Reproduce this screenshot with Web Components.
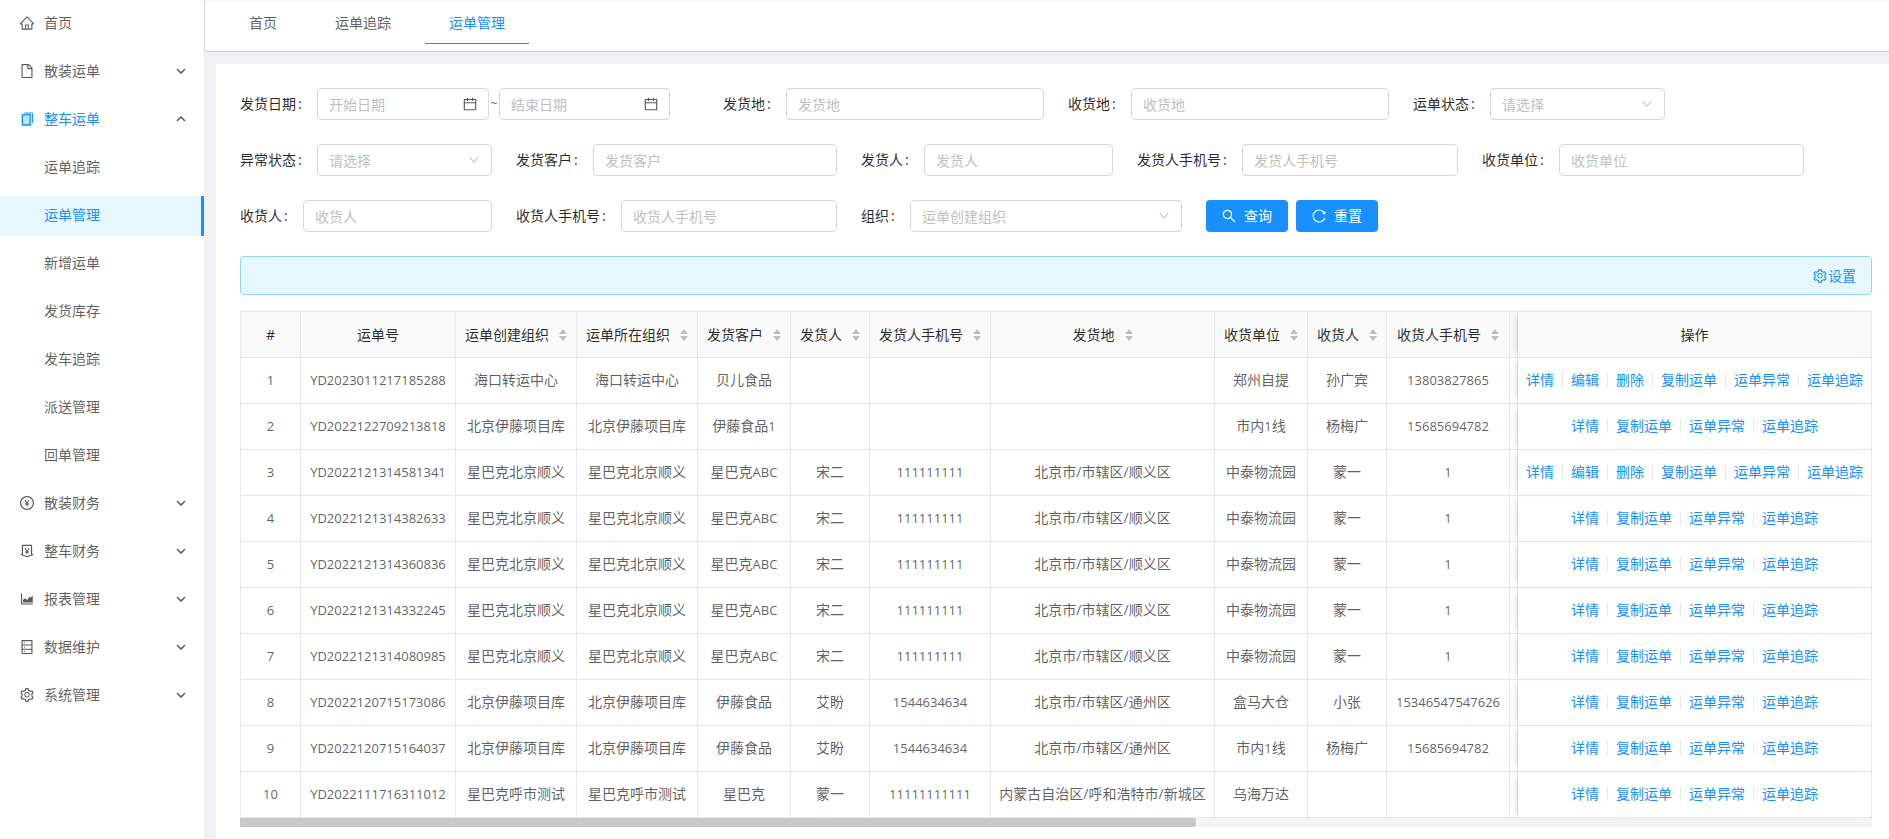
<!DOCTYPE html>
<html lang="zh">
<head>
<meta charset="utf-8">
<title>运单管理</title>
<style>
html, body { margin: 0; height: 100%; }
body {
    font: 14px/22px "Open Sans", "Noto Sans CJK SC", sans-serif;
    color: rgba(0, 0, 0, 0.65);
    background: #f0f2f5;
    overflow: hidden;
}
#app { display: flex; height: 839px; }
#main { flex: 1; min-width: 0; display: flex; flex-direction: column; }
</style>
</head>
<body>
<div id="app">
    <side-menu>
        <menu-item icon="home">首页</menu-item>
        <menu-item icon="file" arrow="down">散装运单</menu-item>
        <menu-item icon="copy" arrow="up" open>整车运单</menu-item>
        <menu-item sub>运单追踪</menu-item>
        <menu-item sub selected>运单管理</menu-item>
        <menu-item sub>新增运单</menu-item>
        <menu-item sub>发货库存</menu-item>
        <menu-item sub>发车追踪</menu-item>
        <menu-item sub>派送管理</menu-item>
        <menu-item sub>回单管理</menu-item>
        <menu-item icon="pay" arrow="down">散装财务</menu-item>
        <menu-item icon="money" arrow="down">整车财务</menu-item>
        <menu-item icon="area" arrow="down">报表管理</menu-item>
        <menu-item icon="database" arrow="down">数据维护</menu-item>
        <menu-item icon="setting" arrow="down">系统管理</menu-item>
    </side-menu>
    <div id="main">
        <tab-bar>
            <tab-item>首页</tab-item>
            <tab-item>运单追踪</tab-item>
            <tab-item active>运单管理</tab-item>
        </tab-bar>
        <page-card>
            <form-row>
                <form-field label="发货日期" width="430"><date-range></date-range></form-field>
                <form-field label="发货地" width="350" label-width="92"><text-box>发货地</text-box></form-field>
                <form-field label="收货地" width="321"><text-box>收货地</text-box></form-field>
                <form-field label="运单状态" width="252"><text-box select>请选择</text-box></form-field>
            </form-row>
            <form-row>
                <form-field label="异常状态" width="252"><text-box select>请选择</text-box></form-field>
                <form-field label="发货客户" width="321"><text-box>发货客户</text-box></form-field>
                <form-field label="发货人" width="252"><text-box>发货人</text-box></form-field>
                <form-field label="发货人手机号" width="321"><text-box>发货人手机号</text-box></form-field>
                <form-field label="收货单位" width="322"><text-box>收货单位</text-box></form-field>
            </form-row>
            <form-row>
                <form-field label="收货人" width="252"><text-box>收货人</text-box></form-field>
                <form-field label="收货人手机号" width="321"><text-box>收货人手机号</text-box></form-field>
                <form-field label="组织" width="321"><text-box select>运单创建组织</text-box></form-field>
                <blue-button icon="search">查询</blue-button>
                <blue-button icon="reload">重置</blue-button>
            </form-row>
            <alert-bar>设置</alert-bar>
            <waybill-table></waybill-table>
        </page-card>
    </div>
</div>

<script>
// antd outlined icons, 1024 box
const YEN = 'M660.6 312h-54.5c-3 0-5.8 1.7-7.1 4.4l-84.7 168.8H511l-84.7-168.8a8 8 0 0 0-7.1-4.4h-55.7c-1.3 0-2.6.3-3.8 1-3.9 2.1-5.3 7-3.2 10.8l103.9 191.6h-57c-4.4 0-8 3.6-8 8v27.1c0 4.4 3.6 8 8 8h76v39h-76c-4.4 0-8 3.6-8 8v27.1c0 4.4 3.6 8 8 8h76V704c0 4.4 3.6 8 8 8h49.9c4.4 0 8-3.6 8-8v-63.5h76.3c4.4 0 8-3.6 8-8v-27.1c0-4.4-3.6-8-8-8h-76.3v-39h76.3c4.4 0 8-3.6 8-8v-27.1c0-4.4-3.6-8-8-8H564l103.7-191.6c.6-1.2 1-2.5 1-3.8-.1-4.3-3.7-7.9-8.1-7.9z';
const ICONS = {
    home: '<path d="M946.5 505L560.1 118.8l-25.9-25.9a31.5 31.5 0 0 0-44.4 0L77.5 505a63.9 63.9 0 0 0-18.8 46c.4 35.2 29.7 63.3 64.9 63.3h42.5V940h691.8V614.3h43.4c17.1 0 33.2-6.7 45.3-18.8a63.6 63.6 0 0 0 18.7-45.3c0-17-6.7-33.1-18.8-45.2zM568 868H456V664h112v204zm217.9-325.7V868H632V640c0-22.1-17.9-40-40-40H432c-22.1 0-40 17.9-40 40v228H238.1V542.3h-96l370-369.7 23.1 23.1L882 542.3h-96.1z"/>',
    file: '<path d="M854.6 288.6L639.4 73.4c-6-6-14.1-9.4-22.6-9.4H192c-17.7 0-32 14.3-32 32v832c0 17.7 14.3 32 32 32h640c17.7 0 32-14.3 32-32V311.3c0-8.5-3.4-16.7-9.4-22.7zM790.2 326H602V137.8L790.2 326zm1.8 562H232V136h302v216a42 42 0 0 0 42 42h216v494z"/>',
    copy: '<path d="M216 240h500v660H216z" fill="#bae7ff"/><path d="M340 128h520v632" fill="none" stroke="currentColor" stroke-width="64"/><path d="M216 228h500v668H216z" fill="none" stroke="currentColor" stroke-width="88"/>',
    pay: '<path d="M512 64C264.6 64 64 264.6 64 512s200.6 448 448 448 448-200.6 448-448S759.4 64 512 64zm0 820c-205.4 0-372-166.6-372-372s166.6-372 372-372 372 166.6 372 372-166.6 372-372 372z"/><path d="' + YEN + '"/>',
    money: '<path d="M911.5 700.7a8 8 0 0 0-10.3-4.8L840 718.2V180c0-37.6-30.4-68-68-68H252c-37.6 0-68 30.4-68 68v538.2l-61.3-22.3c-.9-.3-1.8-.5-2.7-.5-4.4 0-8 3.6-8 8V763c0 3.3 2.1 6.3 5.3 7.5L501 910.1c7.1 2.6 14.8 2.6 21.9 0l383.8-139.5c3.2-1.2 5.3-4.2 5.3-7.5v-59.6c0-1-.2-1.9-.5-2.8zM512 837.5l-256-93.1V184h512v560.4l-256 93.1z"/><path d="' + YEN + '"/>',
    area: '<path d="M888 792H200V168c0-4.4-3.6-8-8-8h-56c-4.4 0-8 3.6-8 8v688c0 4.4 3.6 8 8 8h752c4.4 0 8-3.6 8-8v-56c0-4.4-3.6-8-8-8z"/><path d="M256 728V560l128-96 150 110 130-210 64 70 152-150v444z"/>',
    database: '<path d="M832 64H192c-17.7 0-32 14.3-32 32v832c0 17.7 14.3 32 32 32h640c17.7 0 32-14.3 32-32V96c0-17.7-14.3-32-32-32zm-600 72h560v208H232V136zm560 480H232V408h560v208zm0 272H232V680h560v208zM304 240a40 40 0 1 0 80 0 40 40 0 1 0-80 0zm0 272a40 40 0 1 0 80 0 40 40 0 1 0-80 0zm0 272a40 40 0 1 0 80 0 40 40 0 1 0-80 0z"/>',
    setting: '<path d="M924.8 625.7l-65.5-56c3.1-19 4.7-38.4 4.7-57.8s-1.6-38.8-4.7-57.8l65.5-56a32.03 32.03 0 0 0 9.3-35.2l-.9-2.6a443.74 443.74 0 0 0-79.7-137.9l-1.8-2.1a32.12 32.12 0 0 0-35.1-9.5l-81.3 28.9c-30-24.6-63.5-44-99.7-57.6l-15.7-85a32.05 32.05 0 0 0-25.8-25.7l-2.7-.5c-52.1-9.4-106.9-9.4-159 0l-2.7.5a32.05 32.05 0 0 0-25.8 25.7l-15.8 85.4a351.86 351.86 0 0 0-99 57.4l-81.9-29.1a32 32 0 0 0-35.1 9.5l-1.8 2.1a446.02 446.02 0 0 0-79.7 137.9l-.9 2.6c-4.5 12.5-.8 26.5 9.3 35.2l66.3 56.6c-3.1 18.8-4.6 38-4.6 57.1 0 19.2 1.5 38.4 4.6 57.1L99 625.5a32.03 32.03 0 0 0-9.3 35.2l.9 2.6c18.1 50.4 44.9 96.9 79.7 137.9l1.8 2.1a32.12 32.12 0 0 0 35.1 9.5l81.9-29.1c29.8 24.5 63.1 43.9 99 57.4l15.8 85.4a32.05 32.05 0 0 0 25.8 25.7l2.7.5a449.4 449.4 0 0 0 159 0l2.7-.5a32.05 32.05 0 0 0 25.8-25.7l15.7-85a350 350 0 0 0 99.7-57.6l81.3 28.9a32 32 0 0 0 35.1-9.5l1.8-2.1c34.8-41.1 61.6-87.5 79.7-137.9l.9-2.6c4.5-12.3.8-26.3-9.3-35zM788.3 465.9c2.5 15.1 3.8 30.6 3.8 46.1s-1.3 31-3.8 46.1l-6.6 40.1 74.7 63.9a370.03 370.03 0 0 1-42.6 73.6L721 702.8l-31.4 25.8c-23.9 19.6-50.5 35-79.3 45.8l-38.1 14.3-17.9 97a377.5 377.5 0 0 1-85 0l-17.9-97.2-37.8-14.5c-28.5-10.8-55-26.2-78.7-45.7l-31.4-25.9-93.4 33.2c-17-22.9-31.2-47.6-42.6-73.6l75.5-64.5-6.5-40c-2.4-14.9-3.7-30.3-3.7-45.5 0-15.3 1.2-30.6 3.7-45.5l6.5-40-75.5-64.5c11.3-26.1 25.6-50.7 42.6-73.6l93.4 33.2 31.4-25.9c23.7-19.5 50.2-34.9 78.7-45.7l37.9-14.3 17.9-97.2c28.1-3.2 56.8-3.2 85 0l17.9 97 38.1 14.3c28.7 10.8 55.4 26.2 79.3 45.8l31.4 25.8 92.8-32.9c17 22.9 31.2 47.6 42.6 73.6L781.8 426l6.5 39.9zM512 326c-97.2 0-176 78.8-176 176s78.8 176 176 176 176-78.8 176-176-78.8-176-176-176zm79.2 255.2A111.6 111.6 0 0 1 512 614c-29.9 0-58-11.7-79.2-32.8A111.6 111.6 0 0 1 400 502c0-29.9 11.7-58 32.8-79.2C454 401.6 482.1 390 512 390c29.9 0 58 11.6 79.2 32.8A111.6 111.6 0 0 1 624 502c0 29.9-11.7 58-32.8 79.2z"/>',
    search: '<path d="M909.6 854.5L649.9 594.8C690.2 542.7 712 479 712 412c0-80.2-31.3-155.4-87.9-212.1-56.6-56.7-132-87.9-212.1-87.9s-155.5 31.3-212.1 87.9C143.2 256.5 112 331.8 112 412c0 80.1 31.3 155.5 87.9 212.1C256.5 680.8 331.8 712 412 712c67 0 130.6-21.8 182.7-62l259.7 259.6a8.2 8.2 0 0 0 11.6 0l43.6-43.5a8.2 8.2 0 0 0 0-11.6zM570.4 570.4C528 612.7 471.8 636 412 636s-116-23.3-158.4-65.6C211.3 528 188 471.8 188 412s23.3-116.1 65.6-158.4C296 211.3 352.2 188 412 188s116.1 23.2 158.4 65.6S636 352.2 636 412s-23.3 116.1-65.6 158.4z"/>',
    reload: '<path d="M909.1 209.3l-56.4 44.1C775.8 155.1 656.2 92 521.9 92 290 92 102.3 279.5 102 511.5 101.7 743.7 289.8 932 521.9 932c181.3 0 335.8-115 394.6-276.1 1.5-4.2-.7-8.9-4.9-10.3l-56.7-19.5a8 8 0 0 0-10.1 4.8c-1.8 5-3.8 10-5.9 14.9-17.3 41-42.1 77.8-73.7 109.4A344.77 344.77 0 0 1 655.9 829c-42.3 17.9-87.4 27-133.8 27-46.5 0-91.5-9.1-133.8-27A341.5 341.5 0 0 1 279 755.2a342.16 342.16 0 0 1-73.7-109.4c-17.9-42.4-27-87.4-27-133.9s9.1-91.5 27-133.9c17.3-41 42.1-77.8 73.7-109.4 31.6-31.6 68.4-56.4 109.3-73.8 42.3-17.9 87.4-27 133.8-27 46.5 0 91.5 9.1 133.8 27a341.5 341.5 0 0 1 109.3 73.8c9.9 9.9 19.2 20.4 27.8 31.4l-60.2 47a8 8 0 0 0 3 14.1l175.6 43c5 1.2 9.9-2.6 9.9-7.7l.8-180.9c-.1-6.6-7.8-10.3-13-6.2z"/>',
    calendar: '<path d="M880 184H712v-64c0-4.4-3.6-8-8-8h-56c-4.4 0-8 3.6-8 8v64H384v-64c0-4.4-3.6-8-8-8h-56c-4.4 0-8 3.6-8 8v64H144c-17.7 0-32 14.3-32 32v664c0 17.7 14.3 32 32 32h736c17.7 0 32-14.3 32-32V216c0-17.7-14.3-32-32-32zm-40 656H184V460h656v380zM184 392V256h128v48c0 4.4 3.6 8 8 8h56c4.4 0 8-3.6 8-8v-48h256v48c0 4.4 3.6 8 8 8h56c4.4 0 8-3.6 8-8v-48h128v136H184z"/>',
    down: '<path d="M884 256h-75c-5.1 0-9.9 2.5-12.9 6.6L512 654.2 227.9 262.6c-3-4.1-7.8-6.6-12.9-6.6h-75c-6.5 0-10.3 7.4-6.5 12.7l352.6 486.1c12.8 17.6 39 17.6 51.7 0l352.6-486.1c3.9-5.3.1-12.7-6.4-12.7z"/>'
};

class AntIcon extends HTMLElement {
    constructor() {
        super();
        const size = this.getAttribute('size') || 16;
        this.attachShadow({ mode: 'open' }).innerHTML = `
            <style>
            :host { display: inline-flex; flex: none; width: ${size}px; height: ${size}px; }
            svg { width: 100%; height: 100%; fill: currentColor; }
            </style>
            <svg viewBox="0 0 1024 1024">${ICONS[this.getAttribute('name')] || ''}</svg>
        `;
    }
}

class SideMenu extends HTMLElement {
    constructor() {
        super();
        this.attachShadow({ mode: 'open' }).innerHTML = `
            <style>
            :host { display: block; flex: none; width: 204px; box-sizing: border-box; padding-top: 4px; background: #fff; }
            </style>
            <slot></slot>
        `;
    }
}

class MenuItem extends HTMLElement {
    constructor() {
        super();
        const icon = this.getAttribute('icon');
        const arrow = this.getAttribute('arrow');
        const points = arrow === 'up' ? '1,5 5,1 9,5' : '1,1 5,5 9,1';
        this.attachShadow({ mode: 'open' }).innerHTML = `
            <style>
            :host {
                display: flex;
                align-items: center;
                box-sizing: border-box;
                height: 40px;
                margin-bottom: 8px;
                padding: 0 18px 2px 44px;
                position: relative;
            }
            :host([open]), :host([selected]) { color: #1890ff; }
            :host([selected]) { background: #e6f7ff; border-right: 3px solid #1890ff; }
            ant-icon { margin: 0 9px 0 -25px; }
            svg.arrow { margin-left: auto; width: 10px; height: 6px; color: rgba(0, 0, 0, 0.65); }
            </style>
            ${icon ? `<ant-icon name="${icon}"></ant-icon>` : ''}
            <slot></slot>
            ${arrow ? `<svg class="arrow" viewBox="0 0 10 6"><polyline points="${points}" fill="none" stroke="currentColor" stroke-width="1.5"/></svg>` : ''}
        `;
    }
}

class TabBar extends HTMLElement {
    constructor() {
        super();
        this.attachShadow({ mode: 'open' }).innerHTML = `
            <style>
            :host {
                display: flex;
                flex: none;
                gap: 10px;
                box-sizing: border-box;
                height: 52px;
                padding-left: 20px;
                background: #fff;
                border-left: 1px solid #d9d9d9;
                border-bottom: 1px solid #d0d0d0;
                box-shadow: inset 0 2px 2px -1px rgba(0, 0, 0, 0.05);
            }
            </style>
            <slot></slot>
        `;
    }
}

class TabItem extends HTMLElement {
    constructor() {
        super();
        this.attachShadow({ mode: 'open' }).innerHTML = `
            <style>
            :host { display: block; box-sizing: border-box; height: 44px; padding: 12px 24px 0; }
            :host([active]) { color: #1890ff; border-bottom: 1.5px solid #1890ff; }
            </style>
            <slot></slot>
        `;
    }
}

class PageCard extends HTMLElement {
    constructor() {
        super();
        this.attachShadow({ mode: 'open' }).innerHTML = `
            <style>
            :host {
                display: block;
                flex: 1;
                margin: 12px 0 0 12px;
                padding: 24px 17px 0 24px;
                background: #fff;
            }
            </style>
            <slot></slot>
        `;
    }
}

class FormRow extends HTMLElement {
    constructor() {
        super();
        this.attachShadow({ mode: 'open' }).innerHTML = `
            <style>
            :host { display: flex; gap: 24px; height: 32px; margin-bottom: 24px; }
            ::slotted(blue-button) { margin-right: -16px; }
            </style>
            <slot></slot>
        `;
    }
}

class FormField extends HTMLElement {
    constructor() {
        super();
        const labelWidth = this.getAttribute('label-width');
        this.attachShadow({ mode: 'open' }).innerHTML = `
            <style>
            :host { display: flex; flex: none; align-items: center; box-sizing: border-box; width: ${this.getAttribute('width')}px; }
            label {
                flex: none;
                display: flex;
                justify-content: flex-end;
                ${labelWidth ? `width: ${labelWidth}px;` : ''}
                color: rgba(0, 0, 0, 0.85);
                white-space: nowrap;
            }
            .colon { width: 21px; padding-left: 2px; box-sizing: border-box; }
            ::slotted(*) { flex: 1; min-width: 0; }
            </style>
            <label>${this.getAttribute('label')}<span class="colon">:</span></label>
            <slot></slot>
        `;
    }
}

class TextBox extends HTMLElement {
    constructor() {
        super();
        const isSelect = this.hasAttribute('select');
        const icon = this.getAttribute('icon');
        this.attachShadow({ mode: 'open' }).innerHTML = `
            <style>
            :host {
                display: flex;
                align-items: center;
                justify-content: space-between;
                box-sizing: border-box;
                height: 32px;
                padding: 0 11px;
                background: #fff;
                border: 1px solid #d9d9d9;
                border-radius: 4px;
                color: #bfbfbf;
                white-space: nowrap;
            }
            span { padding-top: 1px; }
            ant-icon[name=calendar] { color: rgba(0, 0, 0, 0.65); margin-right: -1px; }
            </style>
            <span><slot></slot></span>
            ${isSelect ? '<ant-icon name="down" size="12"></ant-icon>' : ''}
            ${icon ? `<ant-icon name="${icon}"></ant-icon>` : ''}
        `;
    }
}

class DateRange extends HTMLElement {
    constructor() {
        super();
        this.attachShadow({ mode: 'open' }).innerHTML = `
            <style>
            :host { display: flex; align-items: center; }
            text-box:first-of-type { width: 172px; flex: none; }
            text-box:last-of-type { width: 171px; flex: none; }
            span { flex: none; width: 10px; text-align: center; font-size: 12px; color: #666; }
            </style>
            <text-box icon="calendar">开始日期</text-box>
            <span>~</span>
            <text-box icon="calendar">结束日期</text-box>
        `;
    }
}

class BlueButton extends HTMLElement {
    constructor() {
        super();
        this.attachShadow({ mode: 'open' }).innerHTML = `
            <style>
            :host {
                display: inline-flex;
                align-items: center;
                gap: 7px;
                box-sizing: border-box;
                width: 82px;
                height: 32px;
                padding: 0 16px 0 15px;
                background: #1890ff;
                border-radius: 4px;
                color: #fff;
                white-space: nowrap;
            }
            </style>
            <ant-icon name="${this.getAttribute('icon')}"></ant-icon>
            <slot></slot>
        `;
    }
}

class AlertBar extends HTMLElement {
    constructor() {
        super();
        this.attachShadow({ mode: 'open' }).innerHTML = `
            <style>
            :host {
                display: flex;
                align-items: center;
                justify-content: flex-end;
                box-sizing: border-box;
                height: 39px;
                margin-bottom: 16px;
                padding: 0 15px;
                background: #e6f7ff;
                border: 1px solid #91d5ff;
                border-radius: 4px;
                color: #1890ff;
            }
            </style>
            <ant-icon name="setting"></ant-icon>
            <slot></slot>
        `;
    }
}

const COLUMNS = [
    ['#', 60], ['运单号', 155], ['运单创建组织', 121, 1], ['运单所在组织', 121, 1], ['发货客户', 93, 1], ['发货人', 79, 1],
    ['发货人手机号', 121, 1], ['发货地', 224, 1], ['收货单位', 93, 1], ['收货人', 79, 1], ['收货人手机号', 123, 1], ['', 8]
];
const BJ = '北京伊藤项目库', XBK = '星巴克北京顺义', SY = '北京市/市辖区/顺义区', TZ = '北京市/市辖区/通州区';
const ROWS = [
    ['YD2023011217185288', '海口转运中心', '海口转运中心', '贝儿食品', '', '', '', '郑州自提', '孙广宾', '13803827865', 1],
    ['YD2022122709213818', BJ, BJ, '伊藤食品1', '', '', '', '市内1线', '杨梅广', '15685694782'],
    ['YD2022121314581341', XBK, XBK, '星巴克ABC', '宋二', '111111111', SY, '中泰物流园', '蒙一', '1', 1],
    ['YD2022121314382633', XBK, XBK, '星巴克ABC', '宋二', '111111111', SY, '中泰物流园', '蒙一', '1'],
    ['YD2022121314360836', XBK, XBK, '星巴克ABC', '宋二', '111111111', SY, '中泰物流园', '蒙一', '1'],
    ['YD2022121314332245', XBK, XBK, '星巴克ABC', '宋二', '111111111', SY, '中泰物流园', '蒙一', '1'],
    ['YD2022121314080985', XBK, XBK, '星巴克ABC', '宋二', '111111111', SY, '中泰物流园', '蒙一', '1'],
    ['YD2022120715173086', BJ, BJ, '伊藤食品', '艾盼', '1544634634', TZ, '盒马大仓', '小张', '15346547547626'],
    ['YD2022120715164037', BJ, BJ, '伊藤食品', '艾盼', '1544634634', TZ, '市内1线', '杨梅广', '15685694782'],
    ['YD2022111716311012', '星巴克呼市测试', '星巴克呼市测试', '星巴克', '蒙一', '11111111111', '内蒙古自治区/呼和浩特市/新城区', '乌海万达', '', '']
];

// latin runs are a bit narrower than the cjk text in the original font
const cellText = text => text.replace(/[A-Za-z0-9]+/g, '<span class="num">$&</span>');
const SORTER = '<svg class="sorter" viewBox="0 0 8 12"><path d="M4 0l4 5H0zM4 12L0 7h8z"/></svg>';

class WaybillTable extends HTMLElement {
    constructor() {
        super();
        const head = COLUMNS.map(([title, , sortable]) =>
            `<th>${title ? `<div class="th">${title}${sortable ? SORTER : ''}</div>` : ''}</th>`).join('');
        const body = ROWS.map((row, i) => {
            const links = (row[10] ? ['详情', '编辑', '删除'] : ['详情']).concat('复制运单', '运单异常', '运单追踪');
            const ops = links.map(t => `<a>${t}</a>`).join('<i></i>');
            const cells = row.slice(0, 10).map(t => `<td>${cellText(t)}</td>`).join('');
            return `<tr><td>${cellText(String(i + 1))}</td>${cells}<td></td><td class="op">${ops}</td></tr>`;
        }).join('');
        this.attachShadow({ mode: 'open' }).innerHTML = `
            <style>
            :host { display: block; }
            table {
                table-layout: fixed;
                width: 1632px;
                border-collapse: separate;
                border-spacing: 0;
                border-top: 1px solid #e8e8e8;
                border-left: 1px solid #e8e8e8;
            }
            th, td {
                box-sizing: border-box;
                height: 46px;
                padding: 0 8px;
                border-right: 1px solid #e8e8e8;
                border-bottom: 1px solid #e8e8e8;
                text-align: center;
                white-space: nowrap;
                overflow: hidden;
            }
            td { padding-bottom: 2px; }
            th:nth-last-child(2), td:nth-last-child(2) { padding: 0; }
            th { background: #fafafa; font-weight: normal; color: rgba(0, 0, 0, 0.85); }
            .th { display: flex; align-items: center; justify-content: center; gap: 10px; }
            .sorter { width: 8px; height: 12px; flex: none; fill: #bfbfbf; }
            .num { font-size: 13px; }
            .op, th:last-child { overflow: visible; position: relative; box-shadow: -6px 0 6px -4px rgba(0, 0, 0, 0.12); }
            .op { padding: 0 0 2px; }
            a { color: #1890ff; }
            i { display: inline-block; width: 1px; height: 14px; margin: 0 8px; background: #e8e8e8; vertical-align: -2px; }
            .bar { height: 9px; background: #f5f5f5; }
            .thumb { width: 956px; height: 9px; background: #c8c8c8; border-radius: 0 2px 2px 0; }
            </style>
            <table>
                <colgroup>${COLUMNS.map(c => `<col style="width:${c[1]}px">`).join('')}<col style="width:354px"></colgroup>
                <thead><tr>${head}<th><div class="th">操作</div></th></tr></thead>
                <tbody>${body}</tbody>
            </table>
            <div class="bar"><div class="thumb"></div></div>
        `;
    }
}

customElements.define('ant-icon', AntIcon);
customElements.define('side-menu', SideMenu);
customElements.define('menu-item', MenuItem);
customElements.define('tab-bar', TabBar);
customElements.define('tab-item', TabItem);
customElements.define('page-card', PageCard);
customElements.define('form-row', FormRow);
customElements.define('form-field', FormField);
customElements.define('text-box', TextBox);
customElements.define('date-range', DateRange);
customElements.define('blue-button', BlueButton);
customElements.define('alert-bar', AlertBar);
customElements.define('waybill-table', WaybillTable);
</script>
</body>
</html>
